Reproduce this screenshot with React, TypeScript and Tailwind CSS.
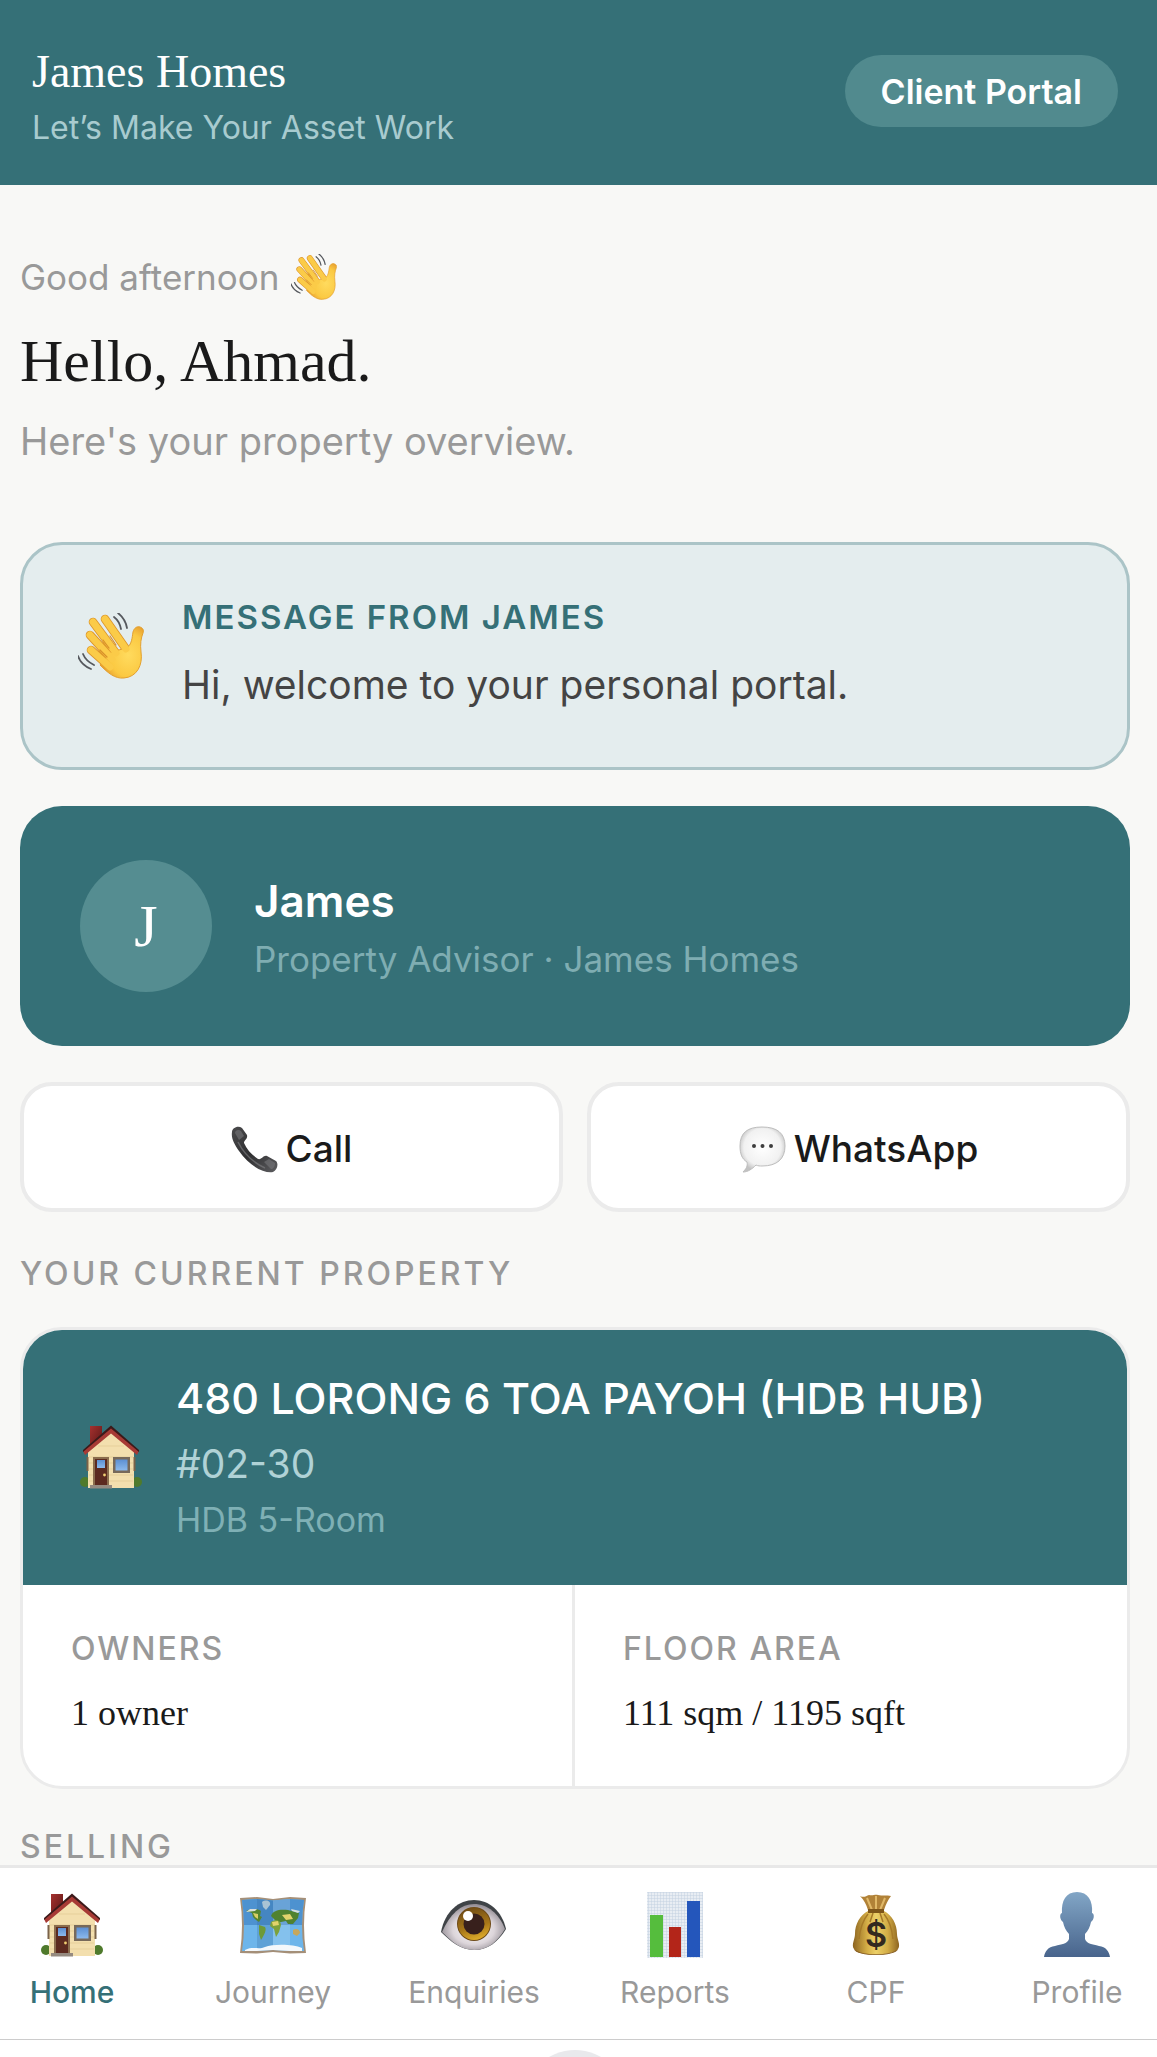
import type { ReactNode } from 'react';
import clsx from 'clsx';

/* ── Icons ─────────────────────────────────────────────── */

// Shared gradients, referenced by id from every icon below
function IconDefs() {
  return (
    <svg className="absolute size-0" aria-hidden="true">
      <defs>
        <radialGradient id="skin" cx="0.65" cy="0.55" r="0.6">
          <stop offset="0" stopColor="#ffdb5e" />
          <stop offset="0.7" stopColor="#fbc942" />
          <stop offset="1" stopColor="#e9a331" />
        </radialGradient>
        <linearGradient id="phone" x1="0" y1="0" x2="1" y2="1">
          <stop offset="0" stopColor="#4a4a4c" />
          <stop offset="0.5" stopColor="#2f2f31" />
          <stop offset="1" stopColor="#5d5d60" />
        </linearGradient>
        <radialGradient id="bubble" cx="0.5" cy="0.45" r="0.55">
          <stop offset="0" stopColor="#ffffff" />
          <stop offset="0.75" stopColor="#f1f1f1" />
          <stop offset="1" stopColor="#c2c2c2" />
        </radialGradient>
        <linearGradient id="chimney" x1="0" y1="0" x2="1" y2="1">
          <stop offset="0" stopColor="#a5312f" />
          <stop offset="1" stopColor="#5a1716" />
        </linearGradient>
        <linearGradient id="glass" x1="0" y1="0" x2="0" y2="1">
          <stop offset="0" stopColor="#5c8fd2" />
          <stop offset="1" stopColor="#8cb9ec" />
        </linearGradient>
        <radialGradient id="eyeball" cx="0.5" cy="0.55" r="0.55">
          <stop offset="0" stopColor="#ffffff" />
          <stop offset="0.6" stopColor="#dcd5da" />
          <stop offset="1" stopColor="#8e888f" />
        </radialGradient>
        <linearGradient id="iris" x1="0.3" y1="0" x2="0.6" y2="1">
          <stop offset="0" stopColor="#6f4b14" />
          <stop offset="0.6" stopColor="#a87719" />
          <stop offset="1" stopColor="#e0ad2b" />
        </linearGradient>
        <linearGradient id="bag" x1="0" y1="0" x2="1" y2="0">
          <stop offset="0" stopColor="#8d6420" />
          <stop offset="0.3" stopColor="#d3ad46" />
          <stop offset="0.5" stopColor="#ecd068" />
          <stop offset="0.75" stopColor="#d3ad46" />
          <stop offset="1" stopColor="#8d6420" />
        </linearGradient>
        <linearGradient id="person" x1="0" y1="0" x2="0" y2="1">
          <stop offset="0" stopColor="#82a6c6" />
          <stop offset="1" stopColor="#48648c" />
        </linearGradient>
        <pattern id="grid" width="3" height="3" patternUnits="userSpaceOnUse">
          <path d="M0 0H3M0 0V3" stroke="#bccbdc" strokeWidth="0.8" />
        </pattern>
      </defs>
    </svg>
  );
}

function WaveIcon({ className }: { className?: string }) {
  return (
    <svg viewBox="0 0 66 66" className={className} aria-hidden="true">
      <g fill="none" strokeLinecap="round">
        <path d="M27 6 48 36M15 9 38 40M12 22 34 46M13 37 32 54" stroke="#dd962b" strokeWidth="8.6" />
        <path
          d="M50 34C54 30 54 25 55 19c1-4 4-6 7-5 3 1 4 3 3 6-2 5-3 11-2 19 2 13-4 25-17 26-9 1-16-5-24-13L32 40Z"
          fill="url(#skin)"
          stroke="#e3a02f"
          strokeWidth="1"
        />
        <path d="M27 6 48 36M15 9 38 40M12 22 34 46M13 37 32 54" stroke="#fbcb48" strokeWidth="7" />
        <path d="M38 32 32 23M31 35 25 27M29 44 22 37" stroke="#d8902a" strokeWidth="1.2" />
        <path d="M36 4c4 3 6 7 7 12M40 0c5 4 8 9 9 15M0 43c2 6 6 10 13 13M5 41c2 5 5 8 11 11" stroke="#56595e" strokeWidth="1.8" />
      </g>
    </svg>
  );
}

function PhoneIcon({ className }: { className?: string }) {
  return (
    <svg viewBox="0 0 47 47" className={className} aria-hidden="true">
      <path
        d="M1 6C1 2 7-1 11 2L16 9c1 4-3 5-3 8 3 7 8 12 14 16 4 1 5-4 9-3l9 5c3 3 1 9-3 11-8 2-24-6-34-21C3 18 0 12 1 6Z"
        fill="url(#phone)"
      />
      <path d="M4 7c0-3 4-4 6-2l3 5-5 4Zm29 29 5-3 6 4c0 4-2 6-4 6Z" fill="#77777a" opacity="0.6" />
      <path d="M7 16c6 12 14 20 27 26" stroke="#77777a" strokeWidth="1.5" fill="none" opacity="0.7" />
    </svg>
  );
}

function BubbleIcon({ className }: { className?: string }) {
  return (
    <svg viewBox="0 0 47 47" className={className} aria-hidden="true">
      <path
        d="M23 1C38 1 46 7 46 20S38 40 23 40c-2 0-4 0-6-1-4 4-8 7-13 7 3-3 5-6 4-10C3 33 1 28 1 20 1 7 8 1 23 1Z"
        fill="url(#bubble)"
        stroke="#bdbdbd"
        strokeWidth="1"
      />
      <circle cx="15" cy="20" r="2" fill="#3e3e3e" />
      <circle cx="23.500" cy="20" r="2" fill="#3e3e3e" />
      <circle cx="32" cy="20" r="2" fill="#3e3e3e" />
    </svg>
  );
}

function HouseIcon({ className }: { className?: string }) {
  return (
    <svg viewBox="0 0 66 66" className={className} aria-hidden="true">
      <circle cx="7" cy="58" r="5" fill="#4f7a2c" />
      <circle cx="59" cy="58" r="5" fill="#4f7a2c" />
      <path d="M12 2h12v14L12 24Z" fill="url(#chimney)" />
      <path d="M10 26 33 6 56 26V64H10Z" fill="#f3dfae" />
      <path d="M11 33H55M11 39H55M11 45H55M11 51H55M11 57H55M20 22H46" stroke="#dfc78f" strokeWidth="0.6" />
      <path d="M33 3 61 27 59 31 33 9.500 7 31 5 27Z" fill="#a73a35" />
      <path d="M33 1.500 61 26 61 28 33 4.500 5 28 5 26Z" fill="#3c1a1a" />
      <path d="M8.500 33h2v14h-2ZM55.500 33h2v14h-2Z" fill="#7b6349" />
      <path d="M15 33H31V62H15Z" fill="#8a6d4e" />
      <path d="M17 35H29V61H17Z" fill="#5c2a20" />
      <path d="M19 36H27V44H19Z" fill="url(#glass)" />
      <circle cx="26.500" cy="51" r="1.400" fill="#f0cf72" />
      <path d="M35 33H52V49H35Z" fill="#77695a" />
      <path d="M37.500 35.500H49.500V46.500H37.500Z" fill="url(#glass)" />
      <path d="M12 61H34V64.500H12Z" fill="#958a80" />
    </svg>
  );
}

function MapIcon({ className }: { className?: string }) {
  return (
    <svg viewBox="0 0 66 66" className={className} aria-hidden="true">
      <path d="M0 6 17 5 33 7 50 5 66 6Q62 33 66 61L50 61.500 33 60 17 61.500 0 61Q4 33 0 6Z" fill="#a48f78" />
      <path d="M2 8 17 7 33 8.500 50 7 64 8Q60 33 64 59L50 59 33 58 17 59 2 59Q6 33 2 8Z" fill="#6db5ea" />
      <path d="M2 8 17 7 33 8.500 50 7 64 8Q62 20 62 33H4Q4 20 2 8Z" fill="#4d92d0" />
      <path d="M17 7 33 8.500V58L17 59Z" fill="#285d93" opacity="0.22" />
      <path d="M33 8.500 50 7V59L33 58Z" fill="#ffffff" opacity="0.16" />
      <path d="M22 10c4-3 9-1 8 3l-4 5-3-3Z" fill="#a9c3d4" />
      <path d="M6 19c4-2 11-3 15 0l-1 5 2 1-3 5-3-2-3-3-1-4Z" fill="#55852f" />
      <path d="M13 21l5 1v5l-3-2Z" fill="#d9cf66" />
      <path d="M19 33l6 2c2 3-1 8-4 13l-2-6Z" fill="#6d9a38" />
      <path d="M31 24c2-6 9-7 17-6l11 3-1 5-5 6-5 0-2-3-5 1-4 0Z" fill="#508230" />
      <path d="M31 30c4-3 10-2 10 3l-2 7-3 5-2-8-4-3Z" fill="#7da13b" />
      <path d="M32 30l6-1 1 4-6 1ZM42 23l8-1 3 5-7 1Z" fill="#e2d36c" />
      <path d="M53 38c3-2 7-1 7 3l-3 3-4-2Z" fill="#c6a75c" />
      <path d="M6 20l4-3 7 0-2 2ZM51 17l9 2-2 2-6-2Z" fill="#d7dedd" />
      <path d="M5 58c8-4 14 0 20-3 8-3 28-3 37 1v3l-12 0-17-1-16 1-12 0Z" fill="#f4f8fb" />
    </svg>
  );
}

function EyeIcon({ className }: { className?: string }) {
  return (
    <svg viewBox="0 0 66 66" className={className} aria-hidden="true">
      <path d="M0 40C4 19 18 8 33 8 48 8 61 19 65 37 57 50 47 58 33 58 20 58 9 49 0 40Z" fill="#3f4347" />
      <path d="M1 40C9 22 20 12 33 12 47 12 58 22 64 37 56 50 47 58 33 58 20 58 10 49 1 40Z" fill="url(#eyeball)" />
      <circle cx="33" cy="32" r="17" fill="#6e4a16" />
      <circle cx="33" cy="32" r="16" fill="url(#iris)" />
      <circle cx="33" cy="32" r="10.500" fill="#38201c" />
      <circle cx="27" cy="24" r="5" fill="#ffffff" />
    </svg>
  );
}

function ChartIcon({ className }: { className?: string }) {
  return (
    <svg viewBox="0 0 66 66" className={className} aria-hidden="true">
      <path d="M5 0H61V66H5Z" fill="#e8edf3" />
      <path d="M5 0H61V66H5Z" fill="url(#grid)" />
      <path d="M8 23H21V65H8Z" fill="#55bd3d" />
      <path d="M27 35H39V65H27Z" fill="#b32519" />
      <path d="M45 9H58V65H45Z" fill="#2456bb" />
    </svg>
  );
}

function MoneyBagIcon({ className }: { className?: string }) {
  return (
    <svg viewBox="0 0 66 66" className={className} aria-hidden="true">
      <path d="M17 4c4 2 6 0 9-1 4 1 6-1 9 0 4 1 9 0 13 1-3 4-5 8-7 14v4H25v-4C23 12 21 8 17 4Z" fill="#b18238" />
      <path d="M24 6l5 12M33 4v14M42 6l-5 12" stroke="#e0b868" strokeWidth="2" />
      <path
        d="M25 19h16c8 4 13 13 13 23 0 5 4 11 1 15-4 7-40 8-44 0-3-4 1-10 1-15 0-10 5-19 13-23Z"
        fill="url(#bag)"
      />
      <path d="M25 22c-5 6-8 15-9 25M41 22c5 6 8 15 9 25M30 21l-3 9M37 21l3 9" stroke="#a67a28" strokeWidth="1.500" fill="none" />
      <path d="M25 17H41V21H25Z" fill="#7d5519" />
      <path d="M11 57c7 7 37 7 44 0-2 8-42 8-44 0Z" fill="#84591b" />
      <text x="33" y="55" textAnchor="middle" fontFamily="Inter, sans-serif" fontSize="34" fontWeight="600" fill="#33291f">
        $
      </text>
    </svg>
  );
}

function PersonIcon({ className }: { className?: string }) {
  return (
    <svg viewBox="0 0 66 66" className={className} aria-hidden="true">
      <path
        d="M33 0C44 0 49 9 48 21c3 1 2 7-1 9-1 5-3 9-6 12v5c2 5 7 5 14 7 7 1 10 5 11 11H0c1-6 4-10 11-11 7-2 12-2 14-7v-5c-3-3-5-7-6-12-3-2-4-8-1-9C17 9 22 0 33 0Z"
        fill="url(#person)"
      />
    </svg>
  );
}

/* ── Data ──────────────────────────────────────────────── */

const NAV_ITEMS = [
  { label: 'Home', icon: HouseIcon, active: true },
  { label: 'Journey', icon: MapIcon },
  { label: 'Enquiries', icon: EyeIcon },
  { label: 'Reports', icon: ChartIcon },
  { label: 'CPF', icon: MoneyBagIcon },
  { label: 'Profile', icon: PersonIcon },
];

const FACTS = [
  { label: 'OWNERS', value: '1 owner' },
  { label: 'FLOOR AREA', value: '111 sqm / 1195 sqft' },
];

/* ── Pieces ────────────────────────────────────────────── */

function SectionTitle({ children, className }: { children: ReactNode; className?: string }) {
  return (
    <h2 className={clsx('text-[32px] leading-9 font-medium tracking-[3px] text-[#999999]', className)}>
      {children}
    </h2>
  );
}

function ActionButton({ icon, children }: { icon: ReactNode; children: ReactNode }) {
  return (
    <button
      type="button"
      className="flex h-[130px] items-center justify-center gap-2 rounded-[32px] border-4 border-[#ebebeb] bg-white pt-1 text-[37px] font-medium text-[#1a1a1a]"
    >
      {icon}
      {children}
    </button>
  );
}

/* ── Page ──────────────────────────────────────────────── */

export default function App() {
  return (
    <div className="flex min-h-screen flex-col bg-[#f8f8f6] font-['Inter',sans-serif] text-[#1a1a1a]">
      <IconDefs />

      {/* Header */}
      <header className="flex items-center justify-between bg-[#357077] pt-9 pr-[39px] pb-[39px] pl-8">
        <div>
          <div className="font-['Liberation_Serif',serif] text-[46px] leading-[72px] text-white">James Homes</div>
          <p className="mt-0.5 text-[32px] leading-9 text-[#a8cbcf]">Let’s Make Your Asset Work</p>
        </div>
        <span className="flex h-18 items-center rounded-full bg-[#518a8e] px-9 text-[34px] font-semibold text-white">
          Client Portal
        </span>
      </header>

      <main className="pt-[68px] pr-[27px] pl-5">
        {/* Greeting */}
        <div className="flex items-center gap-3 text-[35px] leading-12 text-[#999999]">
          Good afternoon
          <WaveIcon className="size-[46px]" />
        </div>
        <h1 className="mt-5 font-['Liberation_Serif',serif] text-[60px] leading-[80px]">Hello, Ahmad.</h1>
        <p className="mt-3 text-[38px] leading-14 text-[#999999]">Here's your property overview.</p>

        {/* Message */}
        <section className="mt-[73px] flex items-start gap-[38px] rounded-[42px] border-3 border-[#abc4c7] bg-[#e4edee] pt-13 pr-12 pb-[54px] pl-[55px]">
          <WaveIcon className="mt-4 size-[66px] shrink-0" />
          <div>
            <h2 className="text-[33px] leading-10 font-semibold tracking-[2px] text-[#357077]">MESSAGE FROM JAMES</h2>
            <p className="mt-5 text-[39px] leading-14 text-[#444444]">Hi, welcome to your personal portal.</p>
          </div>
        </section>

        {/* Advisor */}
        <section className="mt-9 flex items-center gap-[42px] rounded-[42px] bg-[#357077] px-15 py-[54px]">
          <div className="flex size-[132px] shrink-0 items-center justify-center rounded-full bg-[#558d91] font-['Liberation_Serif',serif] text-[60px] text-white">
            J
          </div>
          <div className="pt-1">
            <h2 className="text-[44px] leading-14 font-semibold text-white">James</h2>
            <p className="mt-1.5 text-[35px] leading-12 text-[#7fadb2]">Property Advisor · James Homes</p>
          </div>
        </section>

        <div className="mt-9 grid grid-cols-2 gap-6">
          <ActionButton icon={<PhoneIcon className="size-[47px]" />}>Call</ActionButton>
          <ActionButton icon={<BubbleIcon className="size-[47px]" />}>WhatsApp</ActionButton>
        </div>

        {/* Property */}
        <SectionTitle className="mt-11">YOUR CURRENT PROPERTY</SectionTitle>
        <section className="mt-[35px] overflow-hidden rounded-[42px] border-3 border-[#ebebeb] bg-white">
          <div className="flex items-center gap-8 bg-[#357077] pt-10 pr-12 pb-[41px] pl-[55px]">
            <HouseIcon className="size-[66px] shrink-0" />
            <div>
              <h3 className="text-[43px] leading-14 font-medium text-white">480 LORONG 6 TOA PAYOH (HDB HUB)</h3>
              <p className="mt-2.5 text-[39px] leading-14 text-[#b0d2d6]">#02-30</p>
              <p className="mt-1 text-[34px] leading-12 text-[#7fb0b5]">HDB 5-Room</p>
            </div>
          </div>
          <dl className="grid grid-cols-2">
            {FACTS.map((fact) => (
              <div key={fact.label} className="border-r-3 border-[#ebebeb] px-12 pt-11 pb-[45px] last:border-r-0">
                <dt className="text-[32px] leading-10 font-medium tracking-[2px] text-[#999999]">{fact.label}</dt>
                <dd className="mt-4 font-['Liberation_Serif',serif] text-[36px] leading-14">{fact.value}</dd>
              </div>
            ))}
          </dl>
        </section>

        <SectionTitle className="mt-10">SELLING</SectionTitle>
      </main>

      {/* Tab bar */}
      <nav className="mt-auto flex justify-between border-t-3 border-b border-t-[#e8e8e8] border-b-[#cccccc] bg-white pt-6 pr-2 pb-[27px]">
        {NAV_ITEMS.map(({ label, icon: Icon, active }) => (
          <a
            key={label}
            href="#"
            className={clsx(
              'flex w-36 flex-col items-center gap-3.5 text-[30px] leading-10',
              active ? 'font-medium text-[#357077]' : 'text-[#999999]',
            )}
          >
            <Icon className="size-[66px]" />
            {label}
          </a>
        ))}
      </nav>
      <div className="flex h-[17px] justify-center overflow-hidden bg-white pt-2.5 pr-2">
        <div className="size-[104px] shrink-0 rounded-full bg-[#e9e9ec]" />
      </div>
    </div>
  );
}
